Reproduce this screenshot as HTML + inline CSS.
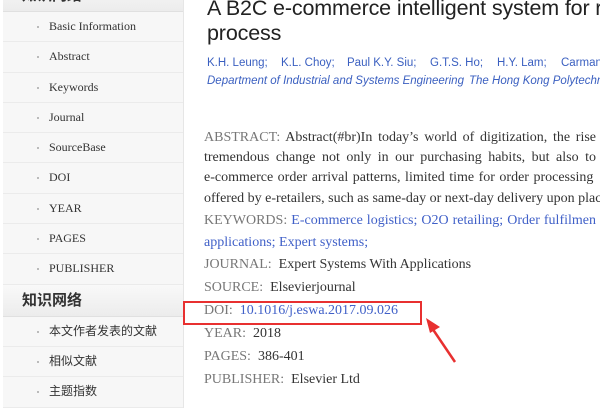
<!DOCTYPE html>
<html><head><meta charset="utf-8"><style>
body{margin:0;width:600px;height:400px;overflow:hidden;background:#fff;position:relative;font-family:"Liberation Serif","Noto Serif CJK SC",serif;}
.side{position:absolute;left:3px;top:-20px;width:180px;background:#f7f7f7;border-right:1px solid #e6e6e6;}
.hd{height:31px;line-height:31px;background:linear-gradient(#f9f9f9,#ececec);font-family:"Liberation Sans","Noto Sans CJK SC",sans-serif;font-size:15px;font-weight:bold;color:#333;padding-left:19px;border-bottom:1px solid #e0e0e0;}
.it{height:29.3px;line-height:29px;border-bottom:1px solid #ebebeb;font-size:12px;color:#333;padding-left:46px;position:relative;}
.it:before{content:"";position:absolute;left:34px;top:14px;width:2px;height:2px;background:#bbb;}
.it.cn{font-family:"Liberation Sans","Noto Sans CJK SC",sans-serif;}
.t{position:absolute;left:207px;font-family:"Liberation Sans",sans-serif;font-size:21.5px;letter-spacing:-0.15px;color:#222;white-space:nowrap;}
.a{position:absolute;left:207px;font-family:"Liberation Sans",sans-serif;font-size:11.5px;color:#3a5fc0;white-space:nowrap;}
.a span{position:absolute;top:0;}
.p{position:absolute;left:204px;font-size:14px;color:#333;white-space:nowrap;}
.j{width:392px;text-align:justify;text-align-last:justify;white-space:normal;height:20px;overflow:hidden;}
.l{color:#777;}
.b{color:#4060c8;}
</style></head><body>
<div class="side">
<div class="hd">知识网络</div>
<div class="it">Basic Information</div>
<div class="it">Abstract</div>
<div class="it">Keywords</div>
<div class="it">Journal</div>
<div class="it">SourceBase</div>
<div class="it">DOI</div>
<div class="it">YEAR</div>
<div class="it">PAGES</div>
<div class="it">PUBLISHER</div>
<div class="hd">知识网络</div>
<div class="it cn">本文作者发表的文献</div>
<div class="it cn">相似文献</div>
<div class="it cn">主题指数</div>
</div>
<div class="t" style="top:-4px">A B2C e-commerce intelligent system for re</div>
<div class="t" style="top:21px">process</div>
<div class="a" style="top:57px;left:0"><span style="left:207px">K.H. Leung;</span><span style="left:281px">K.L. Choy;</span><span style="left:347px">Paul K.Y. Siu;</span><span style="left:430px">G.T.S. Ho;</span><span style="left:497px">H.Y. Lam;</span><span style="left:561px">Carman</span></div>
<div class="a" style="top:75px;left:0;font-style:italic"><span style="left:207px">Department of Industrial and Systems Engineering</span><span style="left:469px">The Hong Kong Polytechnic</span></div>
<div class="p j" style="top:130px"><span class="l">ABSTRACT:</span> Abstract(#br)In today’s world of digitization, the rise</div>
<div class="p j" style="top:150px">tremendous change not only in our purchasing habits, but also to</div>
<div class="p" style="top:170px;word-spacing:1px">e-commerce order arrival patterns, limited time for order processing</div>
<div class="p" style="top:191px">offered by e-retailers, such as same-day or next-day delivery upon plac</div>
<div class="p j" style="top:213px"><span class="l">KEYWORDS:</span> <span class="b">E-commerce logistics; O2O retailing; Order fulfilmen</span></div>
<div class="p b" style="top:235px">applications; Expert systems;</div>
<div class="p" style="top:257px"><span class="l">JOURNAL:</span>&nbsp; Expert Systems With Applications</div>
<div class="p" style="top:280px"><span class="l">SOURCE:</span>&nbsp; Elsevierjournal</div>
<div class="p" style="top:303px"><span class="l">DOI:</span>&nbsp; <span class="b">10.1016/j.eswa.2017.09.026</span></div>
<div class="p" style="top:326px"><span class="l">YEAR:</span>&nbsp; 2018</div>
<div class="p" style="top:349px"><span class="l">PAGES:</span>&nbsp; 386-401</div>
<div class="p" style="top:372px"><span class="l">PUBLISHER:</span>&nbsp; Elsevier Ltd</div>
<div style="position:absolute;left:183px;top:301px;width:235px;height:20px;border:2px solid #e83030;"></div>
<svg style="position:absolute;left:0;top:0" width="600" height="400"><line x1="455" y1="362" x2="432" y2="328" stroke="#e83030" stroke-width="2.5"/><polygon points="426,318 440,327 430,333" fill="#e83030"/></svg>
</body></html>
